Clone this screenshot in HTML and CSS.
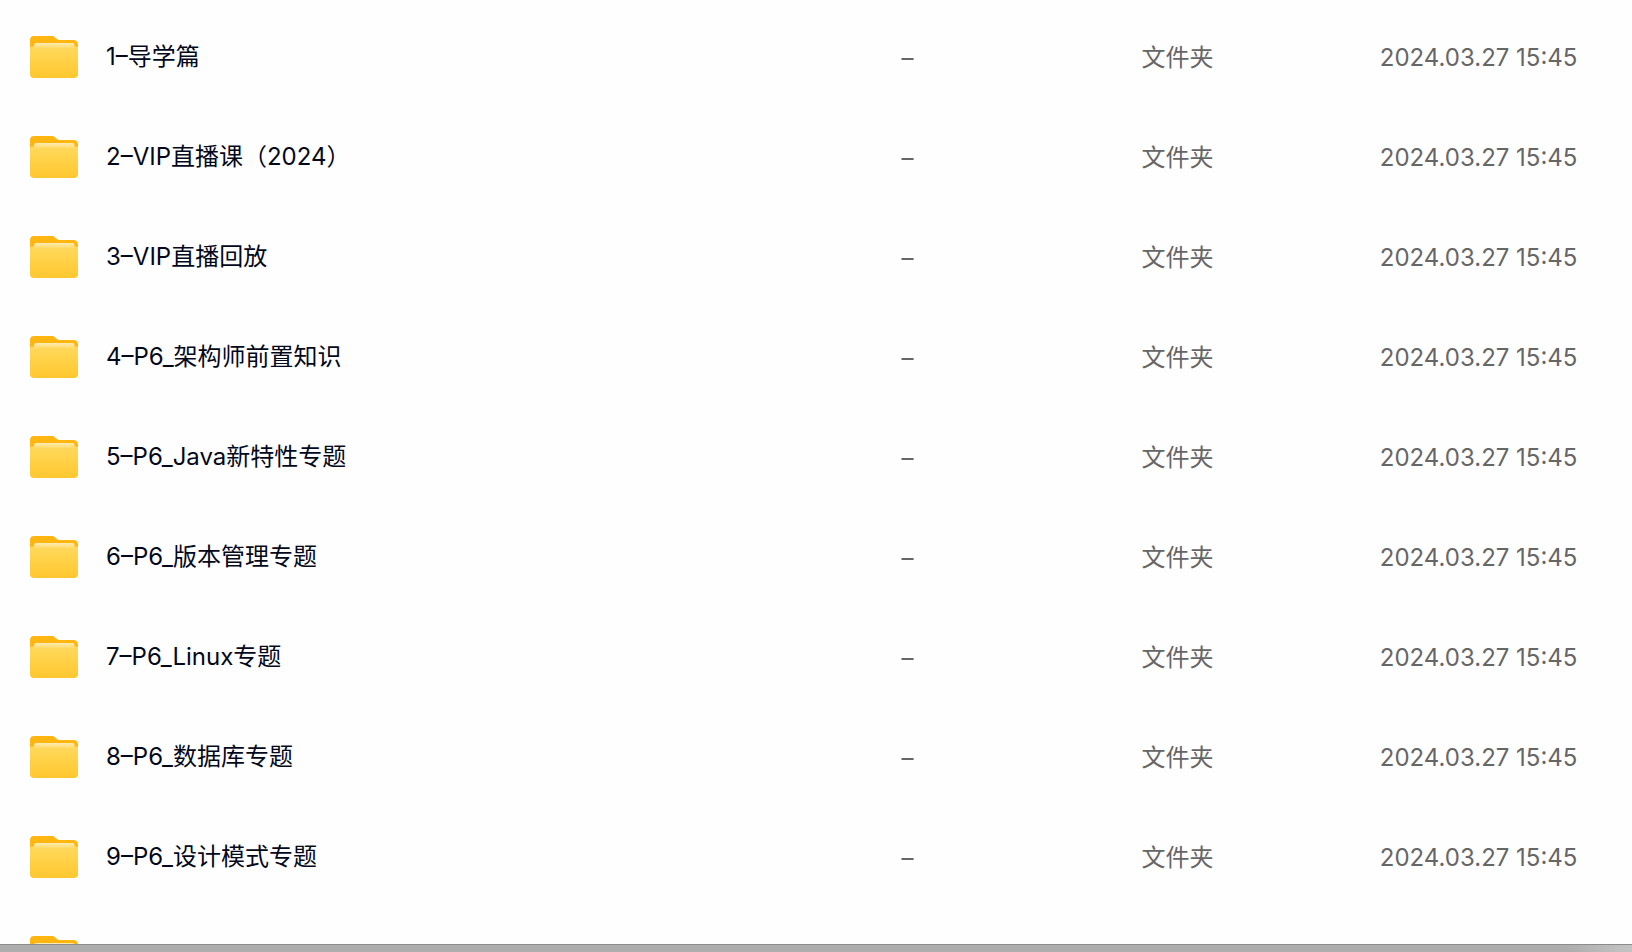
FILE: index.html
```html
<!DOCTYPE html>
<html lang="zh-CN">
<head>
  <meta charset="UTF-8">
  <meta name="viewport" content="width=device-width, initial-scale=1.0">
  <link rel="stylesheet" href="styles.css">
</head>
<body>
  <svg class="icon-defs" width="0" height="0" aria-hidden="true">
    <defs>
      <linearGradient id="folderFront" x1="0" y1="0" x2="0" y2="1">
        <stop offset="0" stop-color="#ffd95c"/>
        <stop offset="1" stop-color="#ffc72e"/>
      </linearGradient>
      <linearGradient id="folderPaper" x1="0" y1="0" x2="0" y2="1">
        <stop offset="0" stop-color="#ffebb4"/>
        <stop offset="1" stop-color="#ffdb68"/>
      </linearGradient>
      <symbol id="folder" viewBox="0 0 48 42">
        <path d="M0 16V4a4 4 0 0 1 4-4h17.500c1.500 0 2.600.4 3.600 1.400l2 1.800c.6.500 1.200.8 2.100.8H43.500A4.500 4.500 0 0 1 48 8.500V16z" fill="#ffb611"/>
        <path d="M0 12c0-1.200.8-1.500 2-1.500h44c1.200 0 2 .3 2 1.500v26a4 4 0 0 1-4 4H4a4 4 0 0 1-4-4z" fill="url(#folderFront)"/>
        <path d="M4 12V9a2 2 0 0 1 2-2h36.500a2 2 0 0 1 2 2v3z" fill="url(#folderPaper)"/>
      </symbol>
    </defs>
  </svg>

  <main class="file-list">
    <table class="file-table">
      <colgroup>
        <col class="col-name">
        <col class="col-size">
        <col class="col-type">
        <col class="col-date">
      </colgroup>
      <tbody>
        <tr>
          <td><div class="file-name"><svg class="folder-icon"><use href="#folder"/></svg><span>1–导学篇</span></div></td>
          <td class="meta">–</td>
          <td class="meta">文件夹</td>
          <td class="meta">2024.03.27 15:45</td>
        </tr>
        <tr>
          <td><div class="file-name"><svg class="folder-icon"><use href="#folder"/></svg><span>2–VIP直播课（2024）</span></div></td>
          <td class="meta">–</td>
          <td class="meta">文件夹</td>
          <td class="meta">2024.03.27 15:45</td>
        </tr>
        <tr>
          <td><div class="file-name"><svg class="folder-icon"><use href="#folder"/></svg><span>3–VIP直播回放</span></div></td>
          <td class="meta">–</td>
          <td class="meta">文件夹</td>
          <td class="meta">2024.03.27 15:45</td>
        </tr>
        <tr>
          <td><div class="file-name"><svg class="folder-icon"><use href="#folder"/></svg><span>4–P6_架构师前置知识</span></div></td>
          <td class="meta">–</td>
          <td class="meta">文件夹</td>
          <td class="meta">2024.03.27 15:45</td>
        </tr>
        <tr>
          <td><div class="file-name"><svg class="folder-icon"><use href="#folder"/></svg><span>5–P6_Java新特性专题</span></div></td>
          <td class="meta">–</td>
          <td class="meta">文件夹</td>
          <td class="meta">2024.03.27 15:45</td>
        </tr>
        <tr>
          <td><div class="file-name"><svg class="folder-icon"><use href="#folder"/></svg><span>6–P6_版本管理专题</span></div></td>
          <td class="meta">–</td>
          <td class="meta">文件夹</td>
          <td class="meta">2024.03.27 15:45</td>
        </tr>
        <tr>
          <td><div class="file-name"><svg class="folder-icon"><use href="#folder"/></svg><span>7–P6_Linux专题</span></div></td>
          <td class="meta">–</td>
          <td class="meta">文件夹</td>
          <td class="meta">2024.03.27 15:45</td>
        </tr>
        <tr>
          <td><div class="file-name"><svg class="folder-icon"><use href="#folder"/></svg><span>8–P6_数据库专题</span></div></td>
          <td class="meta">–</td>
          <td class="meta">文件夹</td>
          <td class="meta">2024.03.27 15:45</td>
        </tr>
        <tr>
          <td><div class="file-name"><svg class="folder-icon"><use href="#folder"/></svg><span>9–P6_设计模式专题</span></div></td>
          <td class="meta">–</td>
          <td class="meta">文件夹</td>
          <td class="meta">2024.03.27 15:45</td>
        </tr>
        <tr>
          <td><div class="file-name"><svg class="folder-icon"><use href="#folder"/></svg></div></td>
          <td></td>
          <td></td>
          <td></td>
        </tr>
      </tbody>
    </table>
  </main>
  <footer class="bottom-edge"></footer>
</body>
</html>
```
FILE: styles.css
```css
* {
  box-sizing: border-box;
}

body {
  margin: 0;
  height: 100vh;
  display: flex;
  flex-direction: column;
  overflow: hidden;
  background-color: #fefefe;
  color: #03081a;
  font-family: Inter, "Noto Sans CJK SC", sans-serif;
  font-size: 24px;
  line-height: 36px;
}

.icon-defs {
  position: absolute;
}

.file-list {
  flex: 1;
  min-height: 0;
  overflow: hidden;
  padding-top: 7px;
}

.file-table {
  width: 100%;
  table-layout: fixed;
  border-collapse: collapse;
}

.col-name {
  width: 55%;
}

.col-size {
  width: 14.7%;
}

.col-type {
  width: 14.6%;
}

.file-table td {
  height: 100px;
  padding: 0;
  vertical-align: middle;
  white-space: nowrap;
}

.file-name {
  display: flex;
  align-items: center;
  gap: 28px;
  padding-left: 30px;
}

.folder-icon {
  width: 48px;
  height: 42px;
  flex-shrink: 0;
}

.file-table .meta {
  padding: 2px 0 0 4px;
  color: #666;
}

.bottom-edge {
  height: 8px;
  flex-shrink: 0;
  border-top: 1px solid #8c8c8c;
  background: linear-gradient(to right, #adadad 96%, #c4c4c4);
}
```
